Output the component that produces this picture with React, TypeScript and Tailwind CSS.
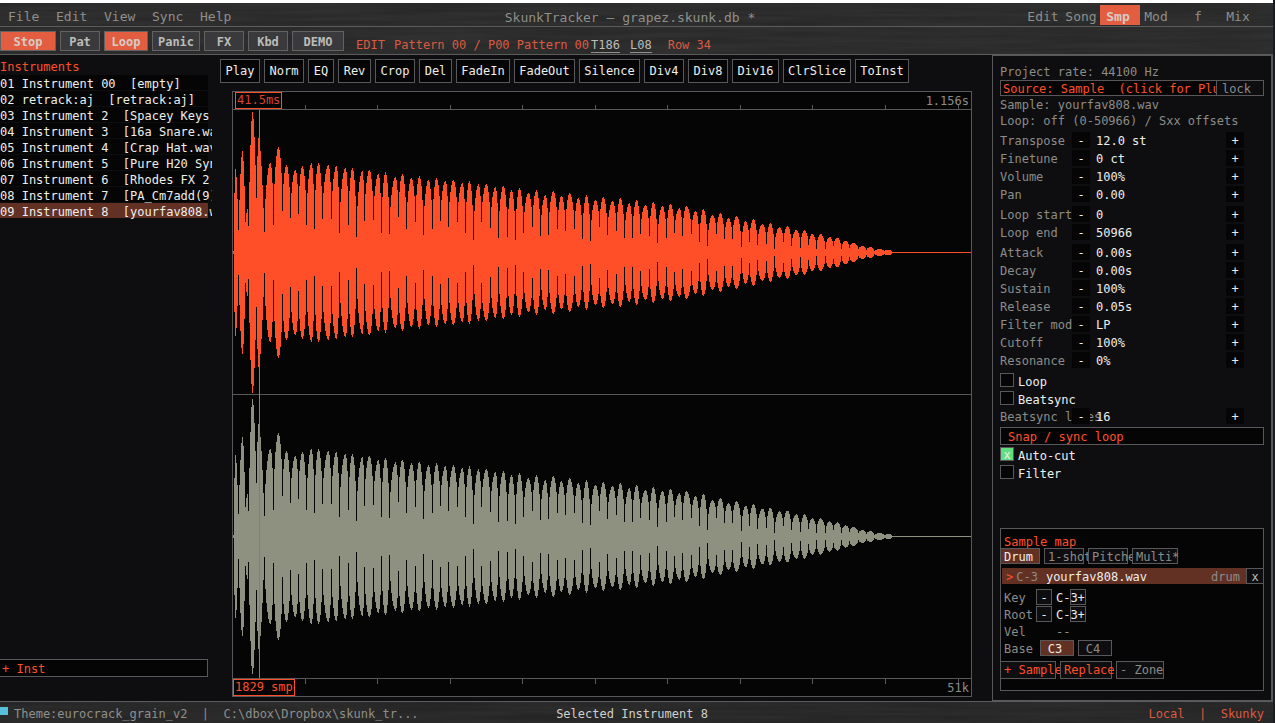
import { useState } from 'react';

const menus = ['File', 'Edit', 'View', 'Sync', 'Help'];

const views = [
  { name: 'Edit', width: 'w-[38px]' },
  { name: 'Song', width: 'w-[38px]' },
  { name: 'Smp', width: 'w-10' },
  { name: 'Mod', width: 'w-8' },
  { name: 'f', width: 'w-[52px]' },
  { name: 'Mix', width: 'w-7' },
];

const transport = [
  { name: 'Stop', width: 'w-14', active: true },
  { name: 'Pat', width: 'w-10' },
  { name: 'Loop', width: 'w-11', active: true },
  { name: 'Panic', width: 'w-12' },
  { name: 'FX', width: 'w-10' },
  { name: 'Kbd', width: 'w-10' },
  { name: 'DEMO', width: 'w-[52px]' },
];

const instruments = [
  '01 Instrument 00  [empty]',
  '02 retrack:aj  [retrack:aj]',
  '03 Instrument 2  [Spacey Keys A]',
  '04 Instrument 3  [16a Snare.wav]',
  '05 Instrument 4  [Crap Hat.wav]',
  '06 Instrument 5  [Pure H20 Syn]',
  '07 Instrument 6  [Rhodes FX 2.wav]',
  '08 Instrument 7  [PA_Cm7add(9)_]',
  '09 Instrument 8  [yourfav808.wav]',
];

const sampleTools = [
  { name: 'Play', width: 'w-10' },
  { name: 'Norm', width: 'w-10' },
  { name: 'EQ', width: 'w-[26px]' },
  { name: 'Rev', width: 'w-[33px]' },
  { name: 'Crop', width: 'w-10' },
  { name: 'Del', width: 'w-[33px]' },
  { name: 'FadeIn', width: 'w-[54px]' },
  { name: 'FadeOut', width: 'w-[61px]' },
  { name: 'Silence', width: 'w-[61px]' },
  { name: 'Div4', width: 'w-10' },
  { name: 'Div8', width: 'w-10' },
  { name: 'Div16', width: 'w-[47px]' },
  { name: 'ClrSlice', width: 'w-[68px]' },
  { name: 'ToInst', width: 'w-[54px]' },
];

const paramGroups = [
  [['Transpose', '12.0 st'], ['Finetune', '0 ct'], ['Volume', '100%'], ['Pan', '0.00']],
  [['Loop start', '0'], ['Loop end', '50966']],
  [
    ['Attack', '0.00s'], ['Decay', '0.00s'], ['Sustain', '100%'], ['Release', '0.05s'],
    ['Filter mode', 'LP'], ['Cutoff', '100%'], ['Resonance', '0%'],
  ],
];

// Envelope of the sample: [x, amplitude], alternating peaks and valleys
const envelope: [number, number][] = [
  [0, 1], [2, 83], [5, 22], [9, 101], [12, 30], [14, 43], [15, 26], [19, 140], [23, 54], [25, 114],
  [31, 20], [37, 89], [40, 27], [45, 105], [49, 41], [53, 87], [57, 34], [62, 82], [65, 38], [69, 86],
  [73, 27], [78, 89], [81, 23], [85, 89], [89, 33], [95, 87], [98, 33], [103, 86], [106, 19], [112, 84],
  [115, 27], [119, 84], [123, 15], [129, 81], [131, 31], [136, 82], [140, 32], [145, 78], [148, 19], [152, 80],
  [156, 18], [162, 75], [165, 35], [169, 78], [173, 23], [178, 74], [182, 30], [186, 76], [190, 17], [195, 72],
  [199, 23], [203, 74], [207, 31], [212, 71], [215, 25], [220, 72], [224, 30], [229, 69], [232, 19], [236, 71],
  [240, 12], [245, 68], [248, 30], [253, 68], [257, 24], [262, 65], [265, 14], [270, 66], [274, 15], [278, 62],
  [282, 12], [286, 64], [290, 19], [295, 59], [299, 25], [303, 62], [307, 16], [312, 57], [315, 17], [320, 61],
  [324, 23], [328, 56], [332, 21], [336, 59], [341, 23], [345, 54], [349, 13], [353, 57], [357, 11], [362, 52],
  [366, 25], [370, 55], [374, 17], [379, 51], [383, 21], [387, 54], [391, 14], [396, 49], [399, 14], [403, 52],
  [407, 18], [412, 47], [416, 16], [420, 50], [424, 9], [429, 46], [433, 14], [437, 48], [441, 19], [446, 44],
  [449, 16], [453, 46], [458, 18], [462, 41], [466, 10], [470, 43], [474, 6], [479, 37], [483, 18], [487, 39],
  [491, 13], [495, 34], [499, 13], [503, 36], [508, 5], [512, 31], [516, 10], [520, 33], [524, 7], [529, 28],
  [533, 8], [537, 29], [541, 3], [546, 25], [550, 10], [554, 26], [558, 6], [563, 22], [567, 4], [571, 22],
  [575, 7], [579, 18], [583, 3], [587, 18], [592, 3], [596, 15], [600, 6], [604, 14], [608, 3], [612, 11],
  [616, 4], [620, 9], [625, 3], [629, 6], [633, 2], [637, 5], [641, 1], [646, 3], [651, 1], [656, 2], [659, 0],
  [738, 0],
];

function wavePath(centre: number, gain: number) {
  let d = '';
  for (let i = 0; i < envelope.length - 1; i++) {
    const [x0, a0] = envelope[i];
    const [x1, a1] = envelope[i + 1];
    const low = Math.min(a0, a1);
    const rising = a1 > a0;
    // the attack transients are pointed, the body of the tone is rounder
    const power = x0 < 30 ? 1 : 0.55;
    for (let x = x0; x < x1; x++) {
      const t = rising ? (x - x0) / (x1 - x0) : (x1 - x) / (x1 - x0);
      const amp = Math.round((low + Math.abs(a1 - a0) * Math.pow(Math.sin((t * Math.PI) / 2), power)) * gain);
      d += `M${x} ${centre - amp}h1v${amp * 2 + 1}h-1z`;
    }
  }
  return d;
}

const ticks = [72, 144, 217, 289, 362, 434, 507, 579, 652, 725];

function Grain() {
  return (
    <svg className="absolute inset-0 h-full w-full opacity-15" aria-hidden="true">
      <filter id="grain">
        <feTurbulence type="fractalNoise" baseFrequency="0.008 0.22" numOctaves={3} seed={4} />
        <feColorMatrix values="0 0 0 0 0  0 0 0 0 0  0 0 0 0 0  2 0 0 0 -0.6" />
      </filter>
      <rect width="100%" height="100%" filter="url(#grain)" />
    </svg>
  );
}

function Ruler({ bottom = false }: { bottom?: boolean }) {
  return (
    <svg className="h-full w-full" viewBox="0 0 738 17" preserveAspectRatio="none" shapeRendering="crispEdges">
      {ticks.map((x) => (
        <rect key={x} x={x} y={bottom ? 0 : 13} width={1} height={5} fill="#58585a" />
      ))}
    </svg>
  );
}

function Waveform() {
  return (
    <div className="relative ml-3 mr-5 mt-2 flex flex-1 flex-col border border-[#58585a] bg-[#050505]">
      <div className="relative h-[18px] border-b border-[#58585a]">
        <Ruler />
        <span className="absolute right-[2px] top-0 leading-[18px] text-[#8c8c88]">1.156s</span>
      </div>
      <svg className="min-h-0 w-full flex-1" viewBox="0 0 738 568" preserveAspectRatio="none" shapeRendering="crispEdges">
        <rect x={0} y={284} width={738} height={1} fill="#58585a" />
        <path d={wavePath(142, 1)} fill="#ff4f28" />
        <path d={wavePath(426, 0.98)} fill="#8f9180" />
        <rect x={26} y={0} width={1} height={568} fill="#ff4f28" />
      </svg>
      <div className="relative h-[18px] border-t border-[#58585a]">
        <Ruler bottom />
        <span className="absolute right-[2px] top-0 leading-[18px] text-[#8c8c88]">51k</span>
      </div>
      <span className="absolute left-[2px] top-0 border border-[#ff4f28] bg-[#050505] px-px leading-[15px] text-[#d8432a]">
        41.5ms
      </span>
      <span className="absolute bottom-0 left-0 border border-[#ff4f28] bg-[#050505] px-px leading-[15px] text-[#ff4f28]">
        1829 smp
      </span>
    </div>
  );
}

function ParamRow({ label, value }: { label: string; value: string }) {
  return (
    <div className="flex h-[18px] items-start leading-5">
      <span className="w-[72px] whitespace-nowrap text-[#8c8c88]">{label}</span>
      <button aria-label={`${label} down`} className="relative mt-px h-4 w-[18px] bg-[#050505] leading-[18px] text-[#eeeeea]">-</button>
      <span className="relative ml-[6px] w-[130px] whitespace-nowrap text-[#eeeeea]">{value}</span>
      <button aria-label={`${label} up`} className="mt-px h-4 w-[18px] bg-[#050505] leading-[18px] text-[#eeeeea]">+</button>
    </div>
  );
}

function Check({ label, initial = false }: { label: string; initial?: boolean }) {
  const [checked, setChecked] = useState(initial);
  return (
    <label className="flex h-[18px] items-start text-[#eeeeea]">
      <span className="relative h-[14px] w-[14px]">
        <input
          type="checkbox"
          checked={checked}
          onChange={() => setChecked(!checked)}
          className="block h-[14px] w-[14px] appearance-none border border-[#58585a] bg-[#050505] checked:bg-[#5fdf80]"
        />
        {checked && <span className="pointer-events-none absolute inset-x-0 top-px text-center leading-[14px]">x</span>}
      </span>
      <span className="ml-1 leading-[18px]">{label}</span>
    </label>
  );
}

function KeyRow({ label }: { label: string }) {
  return (
    <div className="flex h-[17px] items-start pl-[3px]">
      <span className="w-8 leading-[18px] text-[#8c8c88]">{label}</span>
      <button aria-label={`${label} down`} className="h-4 w-4 border border-[#58585a] bg-[#0e0e10] leading-4 text-[#eeeeea]">-</button>
      <span className="relative z-10 ml-1 w-[14px] whitespace-nowrap leading-[18px] text-[#eeeeea]">C-3</span>
      <button aria-label={`${label} up`} className="h-4 w-4 border border-[#58585a] bg-[#0e0e10] pl-[6px] leading-4 text-[#eeeeea]">+</button>
    </div>
  );
}

function SampleMap() {
  const box = 'h-4 border border-[#58585a] px-[3px] text-left whitespace-nowrap leading-4';
  return (
    <section className="mt-[45px] h-[163px] border border-[#58585a] bg-[#050505]">
      <h2 className="h-[19px] pl-[3px] pt-[6px] leading-[14px] text-[#ff4f28]">Sample map</h2>
      <div className="-ml-px flex gap-1 text-[#8c8c88]">
        <button className={`${box} w-10 bg-[#633024] text-[#eeeeea]`}>Drum</button>
        <button className={`${box} w-10 bg-[#0e0e10]`}>1-shot</button>
        <button className={`${box} w-10 bg-[#0e0e10]`}>Pitche</button>
        <button className={`${box} w-[46px] bg-[#0e0e10]`}>Multi*</button>
      </div>
      <div className="ml-px mt-1 flex h-4 bg-[#633024] leading-[18px]">
        <span className="ml-1 text-[#ff4f28]">&gt;</span>
        <span className="ml-[3px] text-[#8c8c88]">C-3</span>
        <span className="ml-2 flex-1 text-[#eeeeea]">yourfav808.wav</span>
        <span className="mr-[6px] text-[#8c8c88]">drum</span>
        <button aria-label="Remove zone" className="h-4 w-[17px] border border-r-0 border-[#58585a] bg-[#0e0e10] leading-4 text-[#bdbdb8]">x</button>
      </div>
      <div className="mt-[5px]">
        <KeyRow label="Key" />
        <KeyRow label="Root" />
        <div className="flex h-[17px] pl-[3px] leading-[18px] text-[#8c8c88]">
          <span className="w-[52px]">Vel</span>
          <span>--</span>
        </div>
        <div className="flex h-[17px] pl-[3px] text-[#8c8c88]">
          <span className="w-9 leading-[18px]">Base</span>
          <button className="h-4 w-[34px] border border-[#58585a] bg-[#633024] pr-1 leading-4 text-[#eeeeea]">C3</button>
          <button className="ml-1 h-4 w-[34px] border border-[#58585a] bg-[#0e0e10] pr-1 leading-4">C4</button>
        </div>
      </div>
      <div className="-ml-px mt-1 flex gap-1">
        <button className="h-[18px] w-14 whitespace-nowrap border border-[#58585a] bg-[#0e0e10] px-[3px] text-left leading-4 text-[#ff4f28]">+ Sample</button>
        <button className="h-[18px] w-[52px] whitespace-nowrap border border-[#58585a] bg-[#0e0e10] px-[3px] text-left leading-4 text-[#ff4f28]">Replace</button>
        <button className="h-[18px] w-12 whitespace-nowrap border border-[#58585a] bg-[#0e0e10] px-[3px] text-left leading-4 text-[#8c8c88]">- Zone</button>
      </div>
    </section>
  );
}

export default function App() {
  const [selected, setSelected] = useState(8);

  return (
    <div className="flex min-h-screen flex-col border-r-2 border-[#1b1b22] bg-[#0e0e10] font-['DejaVu_Sans_Mono',monospace] text-[12px]">
      <header className="relative border-t-[3px] border-white bg-[#303030]">
        <Grain />
        <div className="relative flex h-6 items-stretch border-b border-[#5c5c5c] text-[13px] text-[#8f8f8b]">
          <nav className="flex flex-1 pl-2">
            {menus.map((m) => (
              <button key={m} className="w-12 pt-[2px] text-left leading-6">{m}</button>
            ))}
          </nav>
          <h1 className="leading-[30px]">SkunkTracker – grapez.skunk.db *</h1>
          <nav className="flex flex-1 justify-end pr-[21px]">
            {views.map((v) => (
              <button
                key={v.name}
                className={`${v.width} pt-[2px] ${
                  v.name === 'Smp' ? 'mb-px mt-[2px] bg-[#e35d40] pr-1 leading-5 font-bold text-[#d6ccc8]' : 'leading-6'
                }`}
              >
                {v.name}
              </button>
            ))}
          </nav>
        </div>
        <div className="relative flex h-7 gap-1 border-b border-[#5c5c5c] pt-1">
          {transport.map((b) => (
            <button
              key={b.name}
              className={`${b.width} h-5 border border-[#626262] leading-5 font-bold ${
                b.active ? 'bg-[#e35d40] text-[#d6ccc8]' : 'bg-[#3a3a3c] text-[#bcbcb8]'
              }`}
            >
              {b.name}
            </button>
          ))}
          <div className="ml-2 flex leading-7 text-[#dc5a40]">
            <span className="w-[38px]">EDIT</span>
            <span className="mr-[2px] whitespace-nowrap">Pattern 00 / P00 Pattern 00</span>
            <button className="mt-[5px] h-[17px] border-b border-[#8f8f8b] leading-[18px] text-[#bcbcb8]">T186</button>
            <button className="ml-[10px] mt-[5px] h-[17px] border-b border-[#8f8f8b] leading-[18px] text-[#bcbcb8]">L08</button>
            <span className="ml-4">Row 34</span>
          </div>
        </div>
      </header>

      <main className="flex flex-1">
        <aside className="flex w-[220px] flex-col">
          <h2 className="h-5 leading-6 text-[#ff4f28]">Instruments</h2>
          <ul>
            {instruments.map((name, i) => (
              <li key={name} className="h-4 w-[212px] overflow-hidden">
                <button
                  onClick={() => setSelected(i)}
                  className={`h-[15px] w-[208px] whitespace-pre text-left leading-[18px] text-[#eeeeea] ${
                    i === selected ? 'bg-[#633024]' : 'bg-[#050505]'
                  }`}
                >
                  {name}
                </button>
              </li>
            ))}
          </ul>
          <button className="mb-6 mt-auto h-[18px] w-[208px] border border-l-0 border-[#58585a] bg-[#050505] pl-[2px] pt-px text-left leading-4 text-[#ff4f28]">
            + Inst
          </button>
        </aside>

        <section className="flex min-w-0 flex-1 flex-col pb-1">
          <div className="flex gap-1 pt-1">
            {sampleTools.map((t) => (
              <button key={t.name} className={`${t.width} flex h-6 justify-center border border-[#58585a] bg-[#050505] leading-[22px] text-[#eeeeea]`}>
                {t.name}
              </button>
            ))}
          </div>
          <Waveform />
        </section>

        <aside className="w-[281px] border-2 border-y border-l border-[#58585a] px-[7px] pt-2 text-[#8c8c88]">
          <p className="leading-4">Project rate: 44100 Hz</p>
          <div className="mb-px flex h-4 border border-[#58585a] leading-4">
            <button className="w-[216px] overflow-hidden whitespace-pre border-r border-[#58585a] bg-[#050505] pl-[2px] text-left text-[#ff4f28]">
              Source: Sample  (click for Plu
            </button>
            <button className="pl-[5px] text-left">lock</button>
          </div>
          <p className="leading-4">Sample: yourfav808.wav</p>
          <p className="whitespace-nowrap leading-4">Loop: off (0-50966) / Sxx offsets</p>
          <div className="mt-[2px] flex flex-col gap-[2px]">
            {paramGroups.map((group, i) => (
              <div key={i}>
                {group.map(([label, value]) => (
                  <ParamRow key={label} label={label} value={value} />
                ))}
              </div>
            ))}
          </div>
          <div className="mt-1">
            <Check label="Loop" />
            <Check label="Beatsync" />
          </div>
          <div className="-mt-[2px]">
            <ParamRow label="Beatsync lines" value="16" />
          </div>
          <button className="mb-[2px] mt-[2px] block h-[18px] w-full border border-[#58585a] bg-[#050505] pl-[7px] pt-px text-left leading-4 text-[#ff4f28]">
            Snap / sync loop
          </button>
          <Check label="Auto-cut" initial />
          <Check label="Filter" />
          <SampleMap />
        </aside>
      </main>

      <footer className="relative h-[22px] border-t border-[#5c5c5c] bg-[#2c2c2c]">
        <Grain />
        <div className="relative flex leading-6 text-[#8f8f8b]">
          <div className="flex flex-1">
            <span className="mr-[6px] mt-[5px] h-2 w-2 bg-[#57c1dc]" />
            <span className="whitespace-pre">{'Theme:eurocrack_grain_v2  |  C:\\dbox\\Dropbox\\skunk_tr...'}</span>
          </div>
          <span className="text-[#cfcfcb]">Selected Instrument 8</span>
          <div className="flex-1 whitespace-pre pr-[9px] text-right text-[#dc5a40]">{'Local  |  Skunky'}</div>
        </div>
      </footer>
    </div>
  );
}
